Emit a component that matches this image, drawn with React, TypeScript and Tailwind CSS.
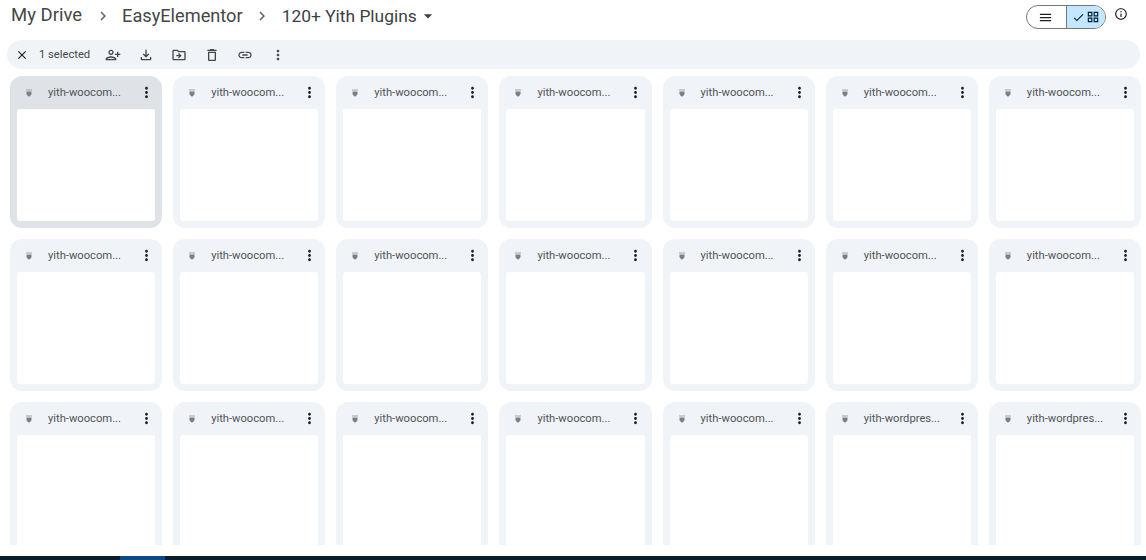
import React from "react";
import {
  MdClose, MdPersonAddAlt, MdOutlineFileDownload, MdOutlineDriveFileMove, MdOutlineDelete,
  MdLink, MdMoreVert, MdMenu, MdCheck, MdOutlineGridView, MdInfoOutline, MdChevronRight, MdArrowDropDown,
} from "react-icons/md";

function Shield() {
  return (
    <svg width="6" height="8" viewBox="0 0 6 8" className="shrink-0">
      <path d="M0 0.5h6v1h-6z" fill="#a0a4a9" />
      <path d="M0.5 2.5h5v2c0 1.400-1.200 2.400-2.500 3.200-1.300-.8-2.500-1.800-2.500-3.200z" fill="#7c8085" />
    </svg>
  );
}

function Card({ name, selected }: { name: string; selected?: boolean }) {
  return (
    <div className={`flex h-[152px] flex-col rounded-xl px-[7px] pb-[7px] ${selected ? "bg-[#dfe3e7]" : "bg-[#f0f4f9]"}`}>
      <div className="flex h-[33px] shrink-0 items-center pl-[9px]">
        <Shield />
        <span className="ml-[16px] mt-[1px] w-[75px] whitespace-nowrap font-['Roboto',sans-serif] text-[11.2px] text-[#505356]">{name}</span>
        <MdMoreVert className="ml-[15px] text-[#1f1f1f]" size={17} />
      </div>
      <div className="flex-1 rounded-[3px] bg-white" />
    </div>
  );
}

export default function App() {
  const names = Array.from({ length: 21 }, (_, i) => (i === 19 || i === 20 ? "yith-wordpres..." : "yith-woocom..."));
  return (
    <div className="flex h-[560px] w-[1146px] flex-col overflow-hidden bg-white font-['Roboto',sans-serif]">
      <header className="flex h-[40px] shrink-0 items-start">
        <nav className="ml-[11px] mt-[4px] flex h-[24px] items-center text-[#444746]">
          <span className="text-[18.5px]">My Drive</span>
          <MdChevronRight className="ml-[12px] text-[#5f6368]" size={18} />
          <span className="ml-[10px] text-[18.2px]">EasyElementor</span>
          <MdChevronRight className="ml-[10px] text-[#5f6368]" size={18} />
          <span className="ml-[11px] text-[17.4px] text-[#3c4043]">120+ Yith Plugins</span>
          <MdArrowDropDown className="ml-[1px] text-[#3c4043]" size={20} />
        </nav>
        <div className="ml-auto mt-[5px] flex items-start">
          <div className="flex h-[24px] w-[80px] overflow-hidden rounded-full border border-[#747775]">
            <div className="flex w-[39px] items-center justify-center pr-[2px]">
              <MdMenu size={15} className="text-[#1f1f1f]" />
            </div>
            <div className="flex flex-1 items-center justify-center gap-[1px] border-l border-[#747775] bg-[#c2e7ff] pr-[1px]">
              <MdCheck size={13} className="text-[#001d35]" />
              <MdOutlineGridView size={14} className="text-[#001d35]" />
            </div>
          </div>
          <MdInfoOutline className="ml-[8px] mr-[18px] mt-[2px] text-[#1f1f1f]" size={14} />
        </div>
      </header>

      <div className="mx-[7px] flex h-[29px] w-[1133px] shrink-0 items-center rounded-full bg-[#f0f4f9] text-[#444746]">
        <MdClose size={14} className="ml-[8px] text-[#1f1f1f]" />
        <span className="ml-[10px] mt-[1px] w-[52px] whitespace-nowrap text-[11.2px]">1 selected</span>
        <MdPersonAddAlt size={16} className="ml-[14px]" />
        <MdOutlineFileDownload size={16} className="ml-[17px]" />
        <MdOutlineDriveFileMove size={16} className="ml-[17px]" />
        <MdOutlineDelete size={16} className="ml-[17px]" />
        <MdLink size={16} className="ml-[17px]" />
        <MdMoreVert size={16} className="ml-[17px]" />
      </div>

      <main className="mt-[7px] h-[469px] shrink-0 overflow-hidden pl-[10px]">
        <div className="grid w-[1131px] grid-cols-7 gap-[11px]">
          {names.map((n, i) => (
            <Card key={i} name={n} selected={i === 0} />
          ))}
        </div>
      </main>

      <div className="mt-[11px] flex h-[4px] shrink-0 bg-[#0b1c2c]">
        <div className="ml-[120px] w-[45px] bg-[#0b4a85]" />
      </div>
    </div>
  );
}
